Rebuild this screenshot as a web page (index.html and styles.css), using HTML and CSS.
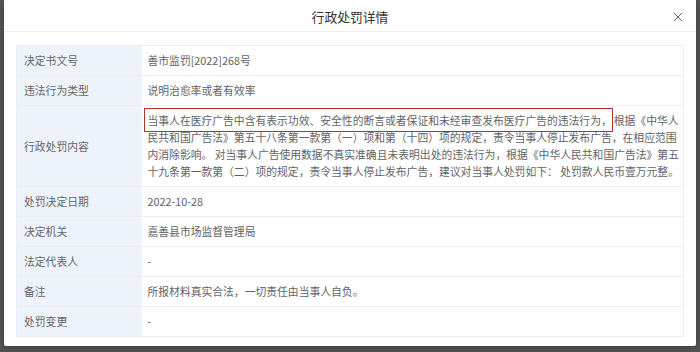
FILE: index.html
```html
<!DOCTYPE html>
<html lang="zh-CN">
<head>
  <meta charset="UTF-8">
  <meta name="viewport" content="width=device-width, initial-scale=1.0">
  <title>行政处罚详情</title>
  <link rel="stylesheet" href="styles.css">
</head>
<body>
  <div class="backdrop">
    <div class="dialog">
      <div class="dialog-header">
        <span class="dialog-title">行政处罚详情</span>
        <span class="dialog-close">
          <svg viewBox="0 0 12 12"><path d="M1 1L11 11M11 1L1 11"/></svg>
        </span>
      </div>

      <div class="dialog-body">
        <table class="detail">
          <colgroup>
            <col class="col-label">
            <col>
          </colgroup>
          <tr>
            <th>决定书文号</th>
            <td>善市监罚[2022]268号</td>
          </tr>
          <tr>
            <th>违法行为类型</th>
            <td>说明治愈率或者有效率</td>
          </tr>
          <tr>
            <th>行政处罚内容</th>
            <td><span class="mark">当事人在医疗广告中含有表示功效、安全性的断言或者保证和未经审查发布医疗广告的违法行为，</span>根据《中华人民共和国广告法》第五十八条第一款第（一）项和第（十四）项的规定，责令当事人停止发布广告，在相应范围内消除影响。 对当事人广告使用数据不真实准确且未表明出处的违法行为，根据《中华人民共和国广告法》第五十九条第一款第（二）项的规定，责令当事人停止发布广告，建议对当事人处罚如下： 处罚款人民币壹万元整。</td>
          </tr>
          <tr>
            <th>处罚决定日期</th>
            <td>2022-10-28</td>
          </tr>
          <tr>
            <th>决定机关</th>
            <td>嘉善县市场监督管理局</td>
          </tr>
          <tr>
            <th>法定代表人</th>
            <td>-</td>
          </tr>
          <tr>
            <th>备注</th>
            <td>所报材料真实合法，一切责任由当事人自负。</td>
          </tr>
          <tr>
            <th>处罚变更</th>
            <td>-</td>
          </tr>
        </table>
      </div>
    </div>
  </div>
</body>
</html>
```

FILE: styles.css
```css
* { box-sizing: border-box; margin: 0; padding: 0; }
html, body {
  height: 100%;
}
body {
  background-color: #565656;
  font-family: "Noto Sans CJK SC", "Microsoft YaHei", sans-serif;
  font-size: 10.8px;
  color: #5f6266;
  overflow: hidden;
}
.backdrop {
  height: 352px;
  padding: 0 4px;
}

.dialog {
  height: 346px;
  background-color: #fff;
  border-radius: 0 0 2px 2px;
  box-shadow: 0 2px 8px rgba(0,0,0,0.3);
}
.dialog-header {
  position: relative;
  height: 32px;
  display: flex;
  align-items: center;
  justify-content: center;
  border-bottom: 1px solid #f0f0f2;
}
.dialog-title {
  font-size: 12.8px;
  color: #333;
  padding-top: 1px;
}
.dialog-close {
  position: absolute;
  right: 13px;
  top: 12px;
  width: 10px;
  height: 10px;
}
.dialog-close svg {
  display: block;
  width: 10px;
  height: 10px;
  stroke: #666;
  stroke-width: 1.2;
  fill: none;
}

.dialog-body {
  padding: 13px 12px 0 12px;
}
.detail {
  width: 668px;
  table-layout: fixed;
  border-collapse: collapse;
  border: 1px solid #eceef3;
}
.col-label { width: 125px; }
.detail th,
.detail td {
  border-bottom: 1px solid #eceef3;
  line-height: 17px;
  padding: 6px 0 6px 6px;
  text-align: left;
  vertical-align: middle;
  font-weight: normal;
}
.detail th {
  background-color: #eef3fb;
  color: #666;
  padding-left: 7px;
}
.detail td {
  color: #606368;
}

/* red highlight around the first clause */
.mark {
  padding: 3px 0 3px 3px;
  margin: 0 2px 0 -3px;
  outline: 1.6px solid #b5302e;
}
```
